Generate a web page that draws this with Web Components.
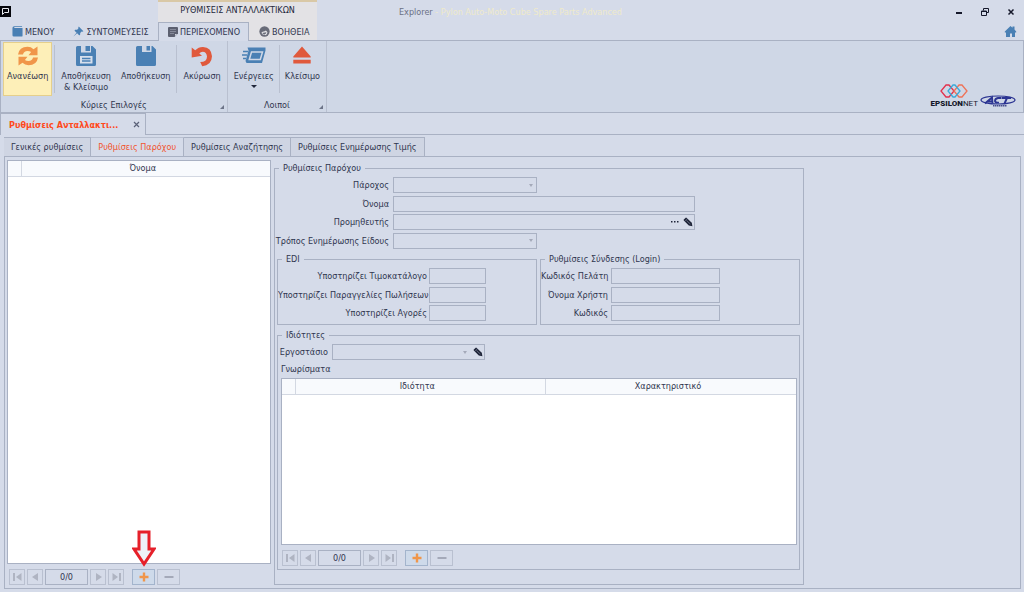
<!DOCTYPE html>
<html lang="el">
<head>
<meta charset="utf-8">
<title>Explorer - Pylon Auto-Moto Cube Spare Parts Advanced</title>
<style>
  :root {
    --bg: #d5dbe9; --ribbon: #cfd7e6; --line: #a9b1c3; --soft: #b9c0d0;
    --ink: #30364f;
  }
  html, body { height: 100%; }
  body { margin: 0; background: var(--bg); color: var(--ink); font: 9px/12px "DejaVu Sans Condensed", "Noto Sans", sans-serif; }
</style>
</head>
<body>
<pylon-app></pylon-app>
<script>
const BASE = `*{box-sizing:border-box} button,input,select{font:inherit;color:inherit;margin:0;padding:0;border:0;background:none;border-radius:0;outline:0} svg{display:block;flex:none}`;
const define = (name, css, html) => customElements.define(name, class extends HTMLElement {
  connectedCallback() {
    if (this.shadowRoot) return;
    const root = this.attachShadow({ mode: 'open' });
    root.innerHTML = `<style>${BASE}${css}</style>${typeof html === 'function' ? html(this) : html}`;
  }
});

const ICONS = {
  book: [11, 11, '0 0 12 12', '<path fill="#4a80b4" d="M.5 2.200Q.5.300 2.500.300H11V1.200H2.800q-1 .5 0 1H11.500V10.500q0 1-1 1H2Q.5 11.500.5 10z"/>'],
  pin: [11, 11, '0 0 12 12', '<path fill="#4a80b4" d="M6.300.6 11.400 5.700 10.100 6.200 9.400 6 7.900 7.500 7.700 9.800 6.700 10.200 4.500 8 .8 11.300.6 11.100 3.900 7.400 1.700 5.200 2.200 4.200 4.500 4 6 2.500 5.700 1.900z"/>'],
  note: [10, 10, '0 0 10 10', '<path fill="#5c6070" d="M1 0h8q1 0 1 1v5.500L6.500 10H1Q0 10 0 9V1Q0 0 1 0z"/><path stroke="#aeb3c2" stroke-width=".5" d="M2 2.500h6M2 4.500h6M2 6.500h4"/><path fill="#cfd3dd" d="M7 9.200V7h2.200z"/>'],
  help: [11, 11, '0 0 12 12', '<circle cx="6" cy="6" r="5.600" fill="#686b78"/><path fill="#e3e3e6" d="M2.800 6.800 4 6.200Q6.500 6 7.500 4.800L8.600 6 9.200 6.800 8.600 9 7 10 6 9.300 4.500 9.500 3.200 8.500z"/><path fill="#686b78" d="M3.500 7.500 8 6.800 7.500 8.500 5 9z"/>'],
  refresh: [22, 20, '0 0 22 20', '<g fill="#f0964a"><path d="M1 8.600Q2.200.8 10.500.8q3.600 0 6 2.400L20.500.5V9.200H11.500L14.100 6.100Q12.700 5 10.500 5 6.700 5.200 6 8.600z"/><path d="M21 11.400Q19.800 19.200 11.500 19.200q-3.600 0-6-2.400L1.500 19.500V10.800H10.500L7.900 13.900q1.400 1.100 3.600 1.100 3.800-.2 4.500-3.600z"/></g>'],
  saveclose: [20, 20, '0 0 20 20', '<path fill="#4a80b4" d="M1.500 0H5v6.500h10V0h1.500L20 3.500V18.500Q20 20 18.500 20h-17Q0 20 0 18.500v-17Q0 0 1.500 0z"/><path fill="#4a80b4" d="M9.500 0H14v5H9.500z"/><path fill="#d6dfec" d="M4 10h12.500v7.500H4z"/><path stroke="#4a80b4" stroke-width="1.300" d="M6 12.500h8.500M6 15h8.500"/>'],
  save: [20, 20, '0 0 20 20', '<path fill="#4a80b4" d="M1.500 0H6v6h9.500V0h1L20 3.500V18.500Q20 20 18.500 20h-17Q0 20 0 18.500v-17Q0 0 1.500 0z"/><path fill="#4a80b4" d="M10.500 0h3.500v4.500h-3.500z"/>'],
  undo: [22, 21, '0 0 22 21', '<path fill="#e0593c" d="M.7 1.500 4.200 4.300Q7.500.8 12 .9 20.500 1.400 21 10.300 20.600 19.500 11.200 20.300L9.200 16Q16 16 16 10.500 15.500 6 11.700 5.800 9.600 5.800 8.300 7.500L11 9.800.7 11.500z"/>'],
  actions: [24, 20, '0 0 24 20', '<path fill="#4a80b4" d="M5.500 1.500h18v3L20 17H4.500L3.500 15 6.500 4.500z"/><path fill="none" stroke="#cfd7e6" stroke-width="1.500" d="M9.500 6h11l-2.200 7.500H7.300z"/><path stroke="#4a80b4" stroke-width="1.300" d="M1 5.500h5M0 9h5M1 12.500h3"/>'],
  eject: [18, 18, '0 0 18 18', '<path fill="#e0593c" d="M9 .5 17.700 10.500v1H.3v-1zM.3 13.700h17.400V17.500H.3z"/>'],
  home: [13, 13, '0 0 13 13', '<path fill="#4a80b4" d="M6.500 1 8.500 2.800V1.500h2v3.100L12.200 6.500v1H11V12H8V8.500H6V12H2V7.500H.8v-1z"/>'],
  min: [8, 10, '0 0 8 10', '<path fill="#15182a" d="M1 5h6v2H1z"/>'],
  restore: [8, 8, '0 0 8 8', '<path fill="none" stroke="#15182a" d="M2.500 2.500V.5h5v4h-2M.5 3h5v4.500h-5z"/><path stroke="#15182a" d="M.5 3.500h5"/>'],
  close: [8, 8, '0 0 8 8', '<path stroke="#15182a" stroke-width="1.500" d="M1.500 1.500l5 5M6.500 1.500l-5 5"/>'],
  tabclose: [7, 7, '0 0 7 7', '<path stroke="#5a6178" stroke-width="1.200" d="M1 1l5 5M6 1l-5 5"/>'],
  pencil: [10, 10, '0 0 10 10', '<path fill="#20263a" d="M.8 2.500 2.700.7Q3.200.4 3.700.9L8.800 5.800 9.400 9.300 5.800 8.600.8 3.600Q.4 3 .8 2.500z"/><path stroke="#8d94a8" stroke-width=".6" d="M2.300 3.800 3.900 2.200M3.500 3.500 7.300 7"/>'],
  dots: [9, 4, '0 0 9 4', '<path fill="#20263a" d="M1 1h1.500v1.500H1zM4 1h1.500v1.500H4zM7 1h1.500v1.500H7z"/>'],
  first: [9, 8, '0 0 9 8', '<path fill="#afb4c2" d="M0 0h2v8H0zM8.500 0v8L3 4z"/>'],
  prev: [7, 8, '0 0 7 8', '<path fill="#afb4c2" d="M6 0v8L0 4z"/>'],
  next: [7, 8, '0 0 7 8', '<path fill="#afb4c2" d="M1 0v8l6-4z"/>'],
  last: [9, 8, '0 0 9 8', '<path fill="#afb4c2" d="M7 0h2v8H7zM.5 0v8L6 4z"/>'],
  plus: [10, 10, '0 0 10 10', '<path fill="#f0964a" d="M3.800.5h2.400V3.800h3.300v2.400H6.200v3.300H3.800V6.200H.5V3.800h3.300z"/>'],
  minus: [10, 10, '0 0 10 10', '<path fill="#a4a9b9" d="M.5 4h9v2h-9z"/>']
};
const icon = n => { const [w, h, vb, body] = ICONS[n]; return `<svg aria-hidden="true" width="${w}" height="${h}" viewBox="${vb}">${body}</svg>`; };

define('ribbon-tab', `
  :host{display:block}
  button{display:flex;align-items:center;gap:2px;height:18px;padding:0 8px 0 9px;border:1px solid transparent;border-bottom:0;white-space:nowrap}
  :host([active]) button{background:var(--bg);border-color:var(--line);height:19px;margin-bottom:-1px}
`, el => `<button role="tab">${icon(el.getAttribute('icon'))}<slot></slot></button>`);

define('app-header', `
  :host{display:grid;grid-template-columns:158px 159px 1fr;height:40px;position:relative;z-index:1}
  .left,.right{display:flex;flex-direction:column;justify-content:space-between}
  .sys{width:11px;height:11px;margin-top:6px;background:#05060c;display:grid;place-items:center}
  .tabs{display:flex}
  .left .tabs{padding-left:2px}
  .ctx{background:#e3e2e5;border-top:2px solid #d9c8a6;display:flex;flex-direction:column;justify-content:space-between}
  .ctx h2{margin:0;font-weight:400;font-size:9px;text-align:center;line-height:17px;color:#23283c}
  .row{display:flex;justify-content:space-between;align-items:center;height:24px;padding:0 9px 0 82px}
  h1{margin:0;font-size:9px;font-weight:400;color:#6a7085}
  h1 span{color:#efeacb}
  .win{display:flex;gap:18px;align-items:center}
  .win button{display:grid;place-items:center;width:8px;height:12px}
  .home{align-self:flex-end;margin:0 7px 2px 0}
`, `
  <div class="left"><button class="sys" aria-label="Μενού συστήματος"><svg width="9" height="9" viewBox="0 0 9 9"><path fill="none" stroke="#e8eaf0" d="M1.500 1.500h6v4h-4l-2 2z"/></svg></button>
    <div class="tabs"><ribbon-tab icon="book">ΜΕΝΟΥ</ribbon-tab><ribbon-tab icon="pin">ΣΥΝΤΟΜΕΥΣΕΙΣ</ribbon-tab></div></div>
  <div class="ctx"><h2>ΡΥΘΜΙΣΕΙΣ ΑΝΤΑΛΛΑΚΤΙΚΩΝ</h2>
    <div class="tabs"><ribbon-tab icon="note" active>ΠΕΡΙΕΧΟΜΕΝΟ</ribbon-tab><ribbon-tab icon="help">ΒΟΗΘΕΙΑ</ribbon-tab></div></div>
  <div class="right"><div class="row"><h1>Explorer <span>- Pylon Auto-Moto Cube Spare Parts Advanced</span></h1>
    <div class="win"><button aria-label="Ελαχιστοποίηση">${icon('min')}</button><button aria-label="Επαναφορά">${icon('restore')}</button><button aria-label="Κλείσιμο">${icon('close')}</button></div></div>
    <button class="home" aria-label="Αρχική">${icon('home')}</button></div>`);

define('ribbon-button', `
  :host{display:block}
  button{display:flex;flex-direction:column;align-items:center;height:54px;padding:3px 3px 0;border:1px solid transparent;line-height:11px;white-space:pre-line;text-align:center}
  .pic{height:25px}
  :host([hot]) button{background:#fdefb8;border-color:#e5cf8c}
  .arrow{margin-top:3px;border:3px solid transparent;border-top-color:#20263a;border-bottom:0}
`, el => `<button><span class="pic">${icon(el.getAttribute('icon'))}</span><span><slot></slot></span>${el.hasAttribute('menu') ? '<i class="arrow"></i>' : ''}</button>`);

define('ribbon-group', `
  :host{display:flex;flex-direction:column;justify-content:space-between;border-right:1px solid var(--soft);padding:1px 2px}
  :host([compact]) .items{gap:1px}
  .items{display:flex;gap:2px}
  .cap{position:relative;text-align:center}
  .cap i{position:absolute;right:1px;bottom:2px;border:2px solid #6d7488;border-top-color:transparent;border-left-color:transparent}
  ::slotted(hr){width:1px;height:48px;margin:3px 0 0;border:0;background:var(--soft)}
`, el => `<div class="items"><slot></slot></div><div class="cap">${el.getAttribute('caption')}<i></i></div>`);

define('brand-logos', `
  :host{display:flex;align-items:flex-end;gap:2px;color:#15182a}
  .eps{display:flex;flex-direction:column;align-items:center;font:8px/9px Roboto,sans-serif;gap:1px}
  b{font-weight:900}
`, `
  <div class="eps"><svg width="28" height="14" viewBox="0 0 28 14"><g fill="none" stroke-width="1.300"><path stroke="#e2304c" d="M7 1h2l5 6-5 6H6L1 7l5-6z"/><path stroke="#ee7358" d="M19 1h3l5 6-5 6h-3l-5-6z"/><path stroke="#3aa9d8" d="M13 1h2l5 6-5 6h-2L8 7z"/></g></svg><span><b>EPSILON</b>NET</span></div>
  <svg width="36" height="13" viewBox="0 0 36 13"><ellipse cx="18" cy="5" rx="17" ry="4" fill="none" stroke="#2b3492" stroke-width="1.200"/><path fill="none" stroke="#2b3492" stroke-width="1.900" d="M5 8.500 12 2.500 12.500 8M8 6.500h4.500M21 3H18q-3 .5-3 3 .3 2 4 1.600M21.500 3H31M27 3 24.500 8.500"/><path stroke="#454c8c" stroke-width="1.500" stroke-dasharray="1.500 .5" d="M13 10.700h14"/></svg>`);

define('app-ribbon', `
  :host{display:flex;height:73px;background:var(--ribbon);border:1px solid var(--line)}
  brand-logos{margin:0 7px 4px auto}
`, `
  <ribbon-group caption="Κύριες Επιλογές">
    <ribbon-button icon="refresh" hot>Ανανέωση</ribbon-button><hr>
    <ribbon-button icon="saveclose">Αποθήκευση
& Κλείσιμο</ribbon-button><ribbon-button icon="save">Αποθήκευση</ribbon-button><hr>
    <ribbon-button icon="undo">Ακύρωση</ribbon-button>
  </ribbon-group>
  <ribbon-group compact caption="Λοιποί">
    <ribbon-button icon="actions" menu>Ενέργειες</ribbon-button><hr><ribbon-button icon="eject">Κλείσιμο</ribbon-button>
  </ribbon-group>
  <brand-logos></brand-logos>`);

define('document-tabs', `
  :host{display:flex;height:22px;border-bottom:1px solid var(--line)}
  .tab{display:flex;align-items:center;justify-content:space-between;width:146px;height:22px;padding:0 5px 0 8px;border:1px solid var(--line);border-bottom:0;background:var(--bg);color:#ff4a1c;font-weight:700}
`, `<div class="tab"><span>Ρυθμίσεις Ανταλλακτι...</span><button aria-label="Κλείσιμο καρτέλας">${icon('tabclose')}</button></div>`);

define('page-tabs', `
  :host{display:flex;padding:2px 4px 0;height:21px}
  button{height:20px;padding:0 7px;border:1px solid var(--line);border-left-width:0;background:#cfd5e3}
  button:first-child{border-left-width:1px}
  button.on{background:var(--bg);color:#f2552f;border-top-color:var(--soft);border-bottom-color:var(--bg)}
`, `<button>Γενικές ρυθμίσεις</button><button class="on">Ρυθμίσεις Παρόχου</button><button>Ρυθμίσεις Αναζήτησης</button><button>Ρυθμίσεις Ενημέρωσης Τιμής</button>`);

define('record-nav', `
  :host{display:flex;gap:2px;height:16px}
  button,output{display:grid;place-items:center;width:16px;height:16px;border:1px solid var(--soft)}
  output{width:43px;border-color:var(--line)}
  .add{position:relative;width:23px;margin-left:6px;border-color:#a3b4cc;background:#cedaea}
  .del{width:23px}
  ::slotted(*){position:absolute;left:-1px;bottom:17px}
`, `<button aria-label="Πρώτη">${icon('first')}</button><button aria-label="Προηγούμενη">${icon('prev')}</button><output>0/0</output><button aria-label="Επόμενη">${icon('next')}</button><button aria-label="Τελευταία">${icon('last')}</button><button class="add" aria-label="Προσθήκη">${icon('plus')}<slot></slot></button><button class="del" aria-label="Διαγραφή">${icon('minus')}</button>`);

define('callout-arrow', `:host{display:block}`,
  `<svg width="24" height="37" viewBox="0 0 24 37"><path fill="#eef1f8" stroke="#e6202a" stroke-width="3" d="M7 2h10v17h5L12 34 2 19h5z"/></svg>`);

define('data-grid', `
  :host{display:block;background:#fff;border:1px solid var(--line);min-height:0}
  table{width:100%;border-collapse:collapse;table-layout:fixed}
  th{height:15px;padding:0 6px 0 0;font-weight:400;background:#f8fafd;border-bottom:1px solid #d3d8e2;border-right:1px solid #d3d8e2}
  th:last-child{border-right:0}
  th:first-child{width:13px;padding:0}
`, el => `<table><thead><tr><th></th>${el.getAttribute('columns').split(',').map(c => `<th scope="col">${c}</th>`).join('')}</tr></thead><tbody></tbody></table>`);

define('group-box', `
  :host{display:flex;flex-direction:column;min-height:0}
  fieldset{flex:1;display:flex;flex-direction:column;min-width:0;min-height:0;margin:0;padding:3px 0 3px;border:1px solid var(--line)}
  legend{margin-left:4px;padding:0 4px;line-height:12px}
`, el => `<fieldset><legend>${el.getAttribute('caption')}</legend><slot></slot></fieldset>`);

define('form-field', `
  :host{display:flex;align-items:center;gap:var(--gap,4px);height:16px}
  label{width:var(--label);text-align:right;white-space:nowrap}
  .box{display:flex;align-items:center;width:var(--field);height:16px;border:1px solid var(--line)}
  :host([wide]) .box{width:302px}
  input,select{flex:1;min-width:0;height:14px;appearance:none}
  .drop{border:2px solid transparent;border-top:3px solid #a4a9b9;border-bottom:0;margin-right:3px;pointer-events:none}
  .box button{margin:0 1px 0 3px}
`, el => {
  const k = el.getAttribute('kind'), l = el.getAttribute('label');
  const ctl = k === 'select' ? '<select id="f"></select><i class="drop"></i>' : '<input id="f" type="text">';
  return `<label for="f">${l}</label><div class="box">${ctl}${el.hasAttribute('browse') ? `<button aria-label="Αναζήτηση">${icon('dots')}</button>` : ''}${el.hasAttribute('edit') ? `<button aria-label="Επεξεργασία">${icon('pencil')}</button>` : ''}</div>`;
});

define('field-list', `:host{display:flex;flex-direction:column;justify-content:space-between}`, `<slot></slot>`);

define('provider-form', `
  :host{display:flex;flex-direction:column;width:530px;min-height:0}
  group-box.outer{flex:1}
  .main{height:72px;--label:114px;--field:144px}
  .pair{display:grid;grid-template-columns:1fr 1fr;gap:3px;margin:4px 3px 0 2px}
  .pair field-list{height:53px}
  .edi{--label:149px;--gap:2px;--field:57px}
  .login{--label:67px;--gap:3px;--field:109px}
  .props{flex:1;margin:4px 3px 11px 2px;--label:50px;--field:153px}
  .cap{margin:3px 3px 3px}
  data-grid{flex:1;margin:0 2px 0 3px}
  record-nav{margin:5px 4px 0}
`, `
  <group-box class="outer" caption="Ρυθμίσεις Παρόχου">
    <field-list class="main">
      <form-field kind="select" label="Πάροχος"></form-field>
      <form-field wide label="Όνομα"></form-field>
      <form-field wide browse edit label="Προμηθευτής"></form-field>
      <form-field kind="select" label="Τρόπος Ενημέρωσης Είδους"></form-field>
    </field-list>
    <div class="pair">
      <group-box caption="EDI"><field-list class="edi">
        <form-field label="Υποστηρίζει Τιμοκατάλογο"></form-field>
        <form-field label="Υποστηρίζει Παραγγελίες Πωλήσεων"></form-field>
        <form-field label="Υποστηρίζει Αγορές"></form-field></field-list></group-box>
      <group-box caption="Ρυθμίσεις Σύνδεσης (Login)"><field-list class="login">
        <form-field label="Κωδικός Πελάτη"></form-field>
        <form-field label="Όνομα Χρήστη"></form-field>
        <form-field label="Κωδικός"></form-field></field-list></group-box>
    </div>
    <group-box class="props" caption="Ιδιότητες">
      <form-field kind="select" edit label="Εργοστάσιο"></form-field>
      <div class="cap">Γνωρίσματα</div>
      <data-grid columns="Ιδιότητα,Χαρακτηριστικό"></data-grid>
      <record-nav></record-nav>
    </group-box>
  </group-box>`);

define('provider-list', `
  :host{display:flex;flex-direction:column;width:264px;min-height:0}
  data-grid{flex:1}
  record-nav{margin:5px 2px 0}
`, `<data-grid columns="Όνομα"></data-grid><record-nav><callout-arrow></callout-arrow></record-nav>`);

define('pylon-app', `
  :host{display:flex;flex-direction:column;height:100vh;min-height:480px}
  main{flex:1;display:flex;gap:3px;min-height:0;margin:0 3px 3px 4px;padding:3px 2px;border:1px solid var(--line)}
  provider-form{margin-top:2px}
`, `<app-header></app-header><app-ribbon></app-ribbon><document-tabs></document-tabs><page-tabs></page-tabs>
  <main><provider-list></provider-list><provider-form></provider-form></main>`);
</script>
</body>
</html>
